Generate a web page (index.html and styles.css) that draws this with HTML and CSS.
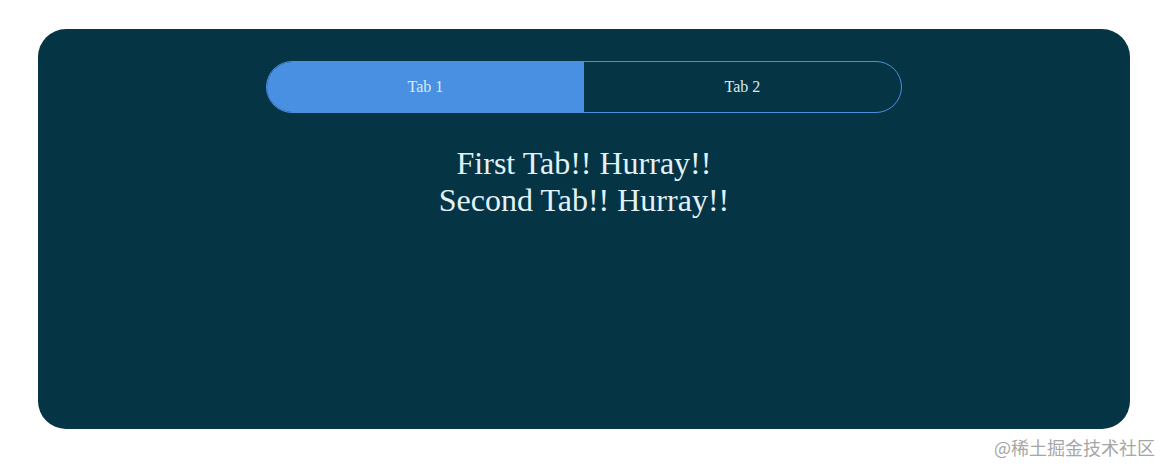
FILE: index.html
```html
<!DOCTYPE html>
<html lang="en">
<head>
<meta charset="utf-8">
<title>Tabs</title>
<link rel="stylesheet" href="styles.css">
</head>
<body>
<div class="page">
  <div class="panel">
    <div class="tabs">
      <div class="tab active">Tab 1</div>
      <div class="tab">Tab 2</div>
    </div>
    <div class="content">
      <div class="line">First Tab!! Hurray!!</div>
      <div class="line">Second Tab!! Hurray!!</div>
    </div>
  </div>
  <div class="watermark">@稀土掘金技术社区</div>
</div>
</body>
</html>
```

FILE: styles.css
```css
html, body {
  margin: 0;
  padding: 0;
  background: #ffffff;
}

.page {
  width: 1169px;
  height: 473px;
  padding: 29px 39px 0 38px;
  box-sizing: border-box;
  display: flex;
  flex-direction: column;
}

.panel {
  height: 400px;
  background: #053445;
  border-radius: 28px;
  display: flex;
  flex-direction: column;
  align-items: center;
  padding-top: 32px;
  box-sizing: border-box;
}

.tabs {
  width: 636px;
  height: 52px;
  display: flex;
  border: 1px solid #4a90e2;
  border-radius: 26px;
  overflow: hidden;
  box-sizing: border-box;
}

.tab {
  flex: 1;
  display: flex;
  align-items: center;
  justify-content: center;
  font-family: "Liberation Serif", serif;
  font-size: 16px;
  color: #dbeaf5;
}

.tab.active {
  background: #4a90e2;
}

.content {
  margin-top: 32px;
  text-align: center;
  font-family: "Liberation Serif", serif;
  font-size: 32px;
  color: #e3f1f8;
}

.watermark {
  align-self: flex-end;
  margin-top: 7px;
  margin-right: -25px;
  font-family: "Noto Sans CJK SC", sans-serif;
  font-size: 18px;
  color: #a6a6a6;
  line-height: 22px;
}
```
